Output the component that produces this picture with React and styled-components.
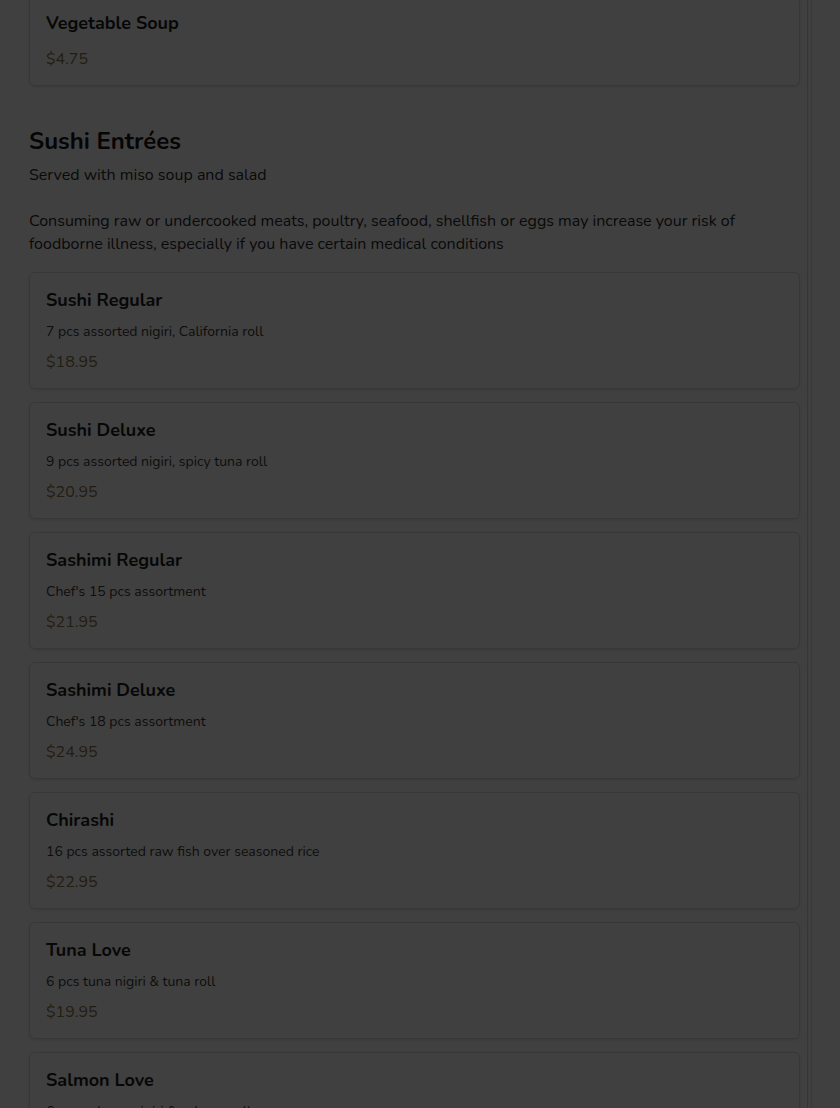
import React from 'react';
import styled, { createGlobalStyle } from 'styled-components';

const GlobalStyle = createGlobalStyle`
  html, body {
    margin: 0;
    padding: 0;
    background: #ffffff;
    overflow: hidden;
  }
  body {
    font-family: Nunito, Lato, "Open Sans", sans-serif;
    color: #333;
  }
`;

const sushiItems = [
  { name: 'Sushi Regular', desc: '7 pcs assorted nigiri, California roll', price: '$18.95' },
  { name: 'Sushi Deluxe', desc: '9 pcs assorted nigiri, spicy tuna roll', price: '$20.95' },
  { name: 'Sashimi Regular', desc: "Chef's 15 pcs assortment", price: '$21.95' },
  { name: 'Sashimi Deluxe', desc: "Chef's 18 pcs assortment", price: '$24.95' },
  { name: 'Chirashi', desc: '16 pcs assorted raw fish over seasoned rice', price: '$22.95' },
  { name: 'Tuna Love', desc: '6 pcs tuna nigiri & tuna roll', price: '$19.95' },
  { name: 'Salmon Love', desc: '6 pcs salmon nigiri & salmon roll', price: '$19.95' },
];

const App = () => {
  return (
    <>
      <GlobalStyle />
      <Page>
        <MenuColumn>
          <ItemCard $first>
            <ItemName>Vegetable Soup</ItemName>
            <Price $solo>$4.75</Price>
          </ItemCard>

          <Section>
            <SectionTitle>Sushi Entrées</SectionTitle>
            <SectionNote>Served with miso soup and salad</SectionNote>
            <Warning>
              Consuming raw or undercooked meats, poultry, seafood, shellfish or eggs may increase your risk of
              foodborne illness, especially if you have certain medical conditions
            </Warning>
            <ItemList>
              {sushiItems.map((item) => (
                <ItemCard key={item.name}>
                  <ItemName>{item.name}</ItemName>
                  <ItemDesc>{item.desc}</ItemDesc>
                  <Price>{item.price}</Price>
                </ItemCard>
              ))}
            </ItemList>
          </Section>
        </MenuColumn>
        <Rail />
        <Side />
      </Page>
      <Backdrop />
    </>
  );
};

const Page = styled.div`
  display: flex;
  height: 1108px;
  overflow: hidden;
`;

const MenuColumn = styled.main`
  width: 771px;
  padding-left: 29px;
  display: flex;
  flex-direction: column;
`;

const Rail = styled.div`
  width: 3px;
  margin-left: 7px;
  border-left: 1px solid #d6d6d6;
  border-right: 1px solid #e4e4e4;
`;

const Side = styled.aside`
  flex: 1;
  background: #fdfdfd;
`;

const ItemCard = styled.div`
  box-sizing: border-box;
  background: #fff;
  border: 1px solid #dcdcdc;
  border-radius: 6px;
  box-shadow: 0 1px 3px rgba(0, 0, 0, 0.12);
  padding: 16px 16px 14px;
  display: flex;
  flex-direction: column;
  margin-top: ${(p) => (p.$first ? '-5px' : '0')};
`;

const ItemName = styled.h3`
  margin: 0;
  font-size: 18px;
  line-height: 22px;
  font-weight: 700;
  color: #1c1c1c;
`;

const ItemDesc = styled.p`
  margin: 11px 0 0;
  font-size: 14px;
  line-height: 20px;
  color: #3a3a3a;
`;

const Price = styled.span`
  margin-top: ${(p) => (p.$solo ? '13px' : '8px')};
  font-size: 16px;
  line-height: 24px;
  color: #8c7848;
`;

const Section = styled.section`
  margin-top: 40px;
`;

const SectionTitle = styled.h2`
  margin: 0;
  font-size: 24px;
  line-height: 30px;
  font-weight: 700;
  color: #151515;
`;

const SectionNote = styled.p`
  margin: 8px 0 0;
  font-size: 16px;
  line-height: 23px;
  color: #2a2a2a;
`;

const Warning = styled.p`
  margin: 23px 0 0;
  font-size: 16px;
  line-height: 23px;
  color: #2a2a2a;
`;

const ItemList = styled.div`
  margin-top: 16px;
  display: flex;
  flex-direction: column;
  gap: 13px;
`;

const Backdrop = styled.div`
  position: fixed;
  inset: 0;
  background: rgba(0, 0, 0, 0.75);
`;

export default App;
